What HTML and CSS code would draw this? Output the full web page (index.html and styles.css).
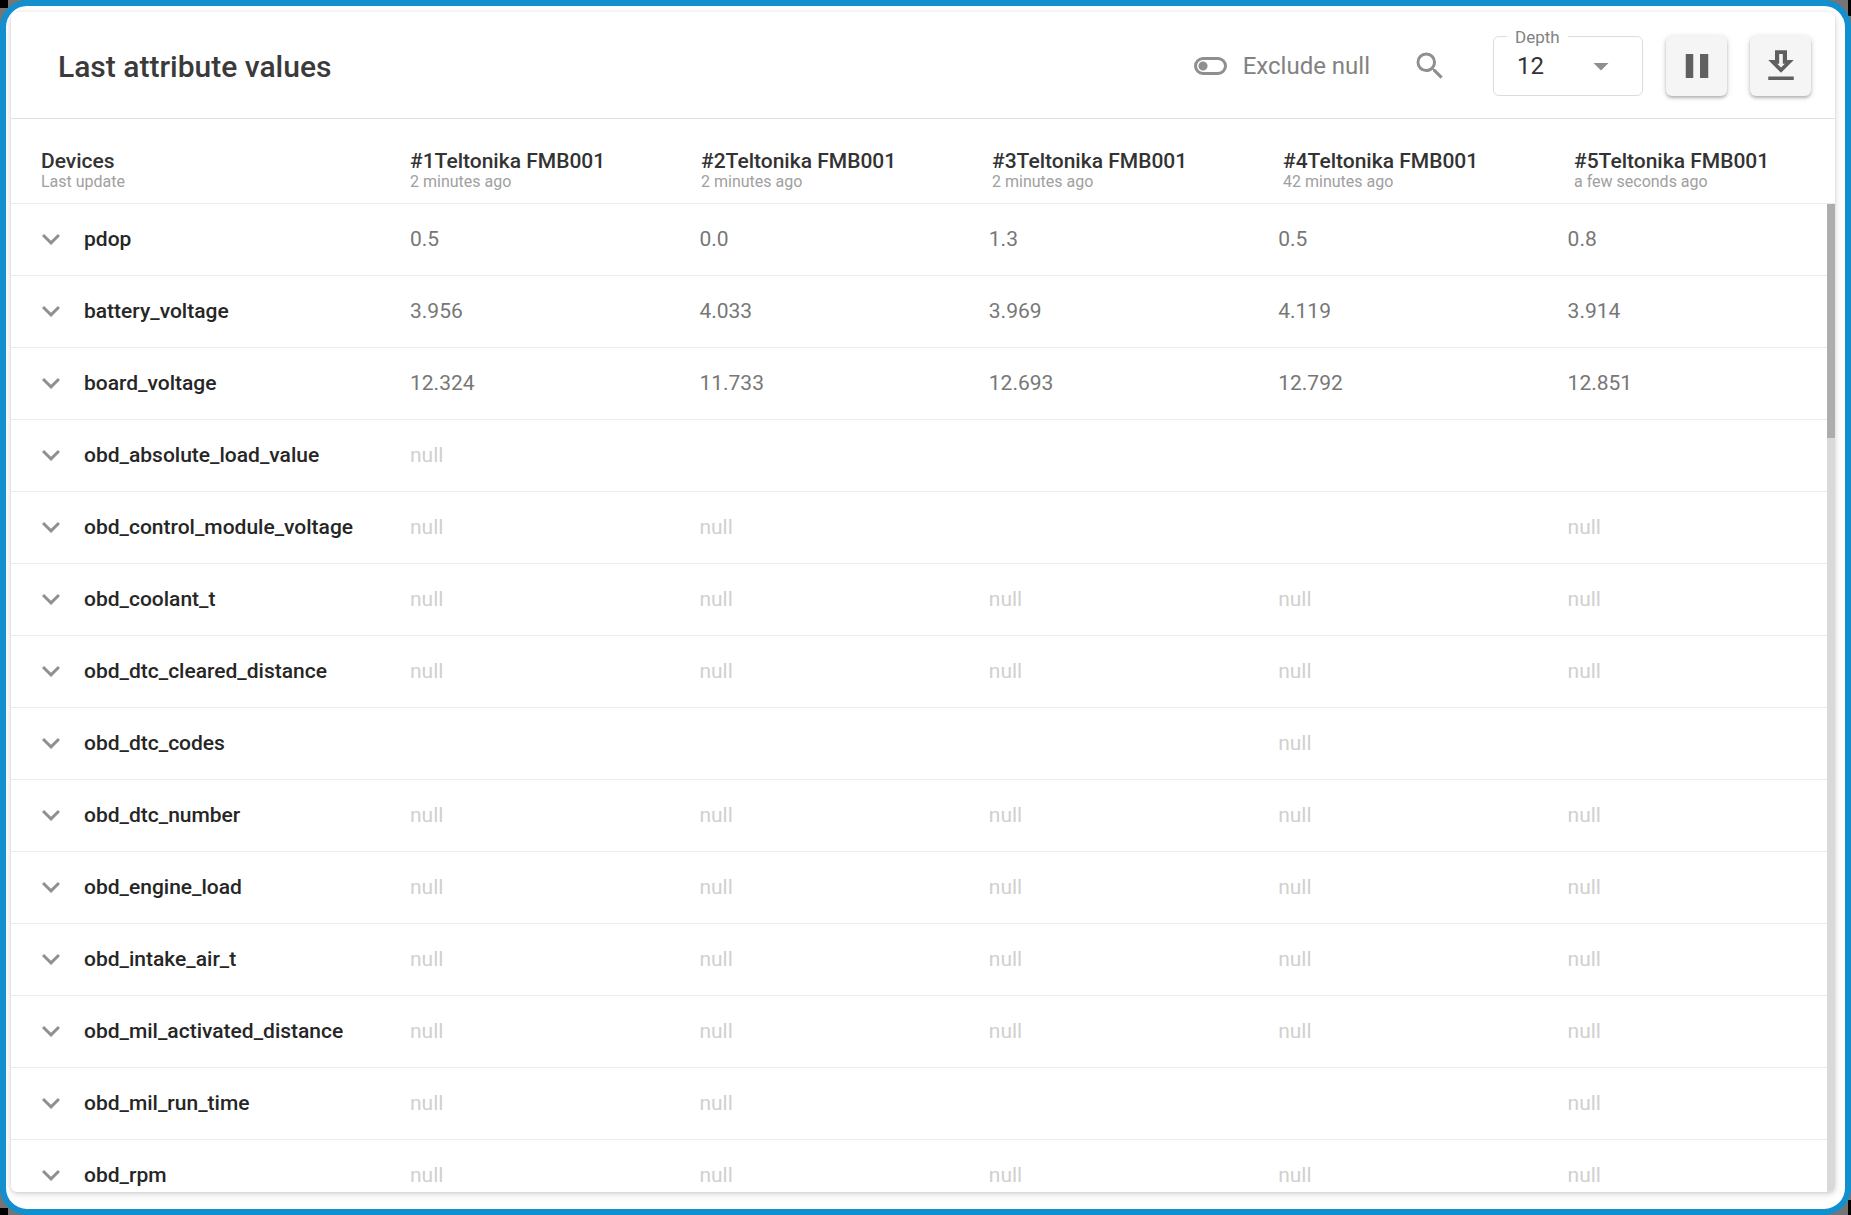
FILE: index.html
```
<!DOCTYPE html>
<html lang="en">
<head>
<meta charset="utf-8">
<title>Last attribute values</title>
<link rel="stylesheet" href="styles.css">
</head>
<body>
<main class="frame">
  <section class="card">
    <header class="toolbar">
      <h1 class="title">Last attribute values</h1>
      <label class="toggle"><input type="checkbox" class="switch">Exclude null</label>
      <button class="search" type="button" aria-label="Search">
        <svg width="36" height="36" viewBox="0 0 24 24" fill="currentColor"><path d="M15.5 14h-.79l-.28-.27A6.471 6.471 0 0 0 16 9.5 6.5 6.5 0 1 0 9.5 16c1.61 0 3.09-.59 4.23-1.57l.27.28v.79l5 4.99L20.49 19l-4.99-5zm-6 0C7.01 14 5 11.99 5 9.5S7.01 5 9.5 5 14 7.01 14 9.5 11.99 14 9.5 14z"/></svg>
      </button>
      <div class="field">
        <label class="field-label" for="depth">Depth</label>
        <select class="select" id="depth"><option>12</option></select>
        <svg class="arrow" width="36" height="36" viewBox="0 0 24 24" fill="currentColor"><path d="M7 10l5 5 5-5z"/></svg>
      </div>
      <button class="action" type="button" aria-label="Pause">
        <svg width="36" height="36" viewBox="0 0 24 24" fill="currentColor"><path d="M4.500 4h5v16h-5zM14 4h5.500v16H14z"/></svg>
      </button>
      <button class="action" type="button" aria-label="Download">
        <svg width="36" height="36" viewBox="0 0 24 24" fill="currentColor"><path fill-rule="evenodd" d="M8 1.500h8V8h4.500L12 16.500 3.500 8H8zM10.800 4v6.500H9.400L12 13l2.600-2.500h-1.400V4zM3.500 19h17v2.300h-17z"/></svg>
      </button>
    </header>
    <table class="grid">
      <thead class="grid-head">
        <tr class="row">
          <th class="corner" scope="col">Devices<small class="sub">Last update</small></th>
          <th scope="col">#1Teltonika FMB001<small class="sub">2 minutes ago</small></th>
          <th scope="col">#2Teltonika FMB001<small class="sub">2 minutes ago</small></th>
          <th scope="col">#3Teltonika FMB001<small class="sub">2 minutes ago</small></th>
          <th scope="col">#4Teltonika FMB001<small class="sub">42 minutes ago</small></th>
          <th scope="col">#5Teltonika FMB001<small class="sub">a few seconds ago</small></th>
        </tr>
      </thead>
      <tbody class="grid-body" id="rows"></tbody>
    </table>
  </section>
</main>
<script src="rows.js"></script>
</body>
</html>
```
FILE: rows.js
```
const N = 'null';
const attributes = [
  ['pdop', '0.5', '0.0', '1.3', '0.5', '0.8'],
  ['battery_voltage', '3.956', '4.033', '3.969', '4.119', '3.914'],
  ['board_voltage', '12.324', '11.733', '12.693', '12.792', '12.851'],
  ['obd_absolute_load_value', N, '', '', '', ''],
  ['obd_control_module_voltage', N, N, '', '', N],
  ['obd_coolant_t', N, N, N, N, N],
  ['obd_dtc_cleared_distance', N, N, N, N, N],
  ['obd_dtc_codes', '', '', '', N, ''],
  ['obd_dtc_number', N, N, N, N, N],
  ['obd_engine_load', N, N, N, N, N],
  ['obd_intake_air_t', N, N, N, N, N],
  ['obd_mil_activated_distance', N, N, N, N, N],
  ['obd_mil_run_time', N, N, '', '', N],
  ['obd_rpm', N, N, N, N, N]
];
const chevron = '<svg class="chevron" width="36" height="36" viewBox="0 0 24 24" fill="currentColor"><path d="M7.410 8.590L12 13.170l4.590-4.580L18 10l-6 6-6-6z"/></svg>';

document.getElementById('rows').innerHTML = attributes.map(([name, ...values]) => `
  <tr class="row">
    <th class="name" scope="row"><button class="expand" type="button">${chevron}${name}</button></th>
    ${values.map(v => `<td class="${v === N ? 'empty' : 'value'}">${v}</td>`).join('')}
  </tr>`).join('');
```
FILE: styles.css
```
* { box-sizing: border-box; }

body {
  margin: 0;
  height: 100vh;
  font-family: Roboto, "Liberation Sans", sans-serif;
  font-size: 21px;
  color: #333;
  background:
    linear-gradient(#000, #000) 0 0 / 8px 8px no-repeat,
    linear-gradient(#000, #000) 100% 0 / 3px 16px no-repeat,
    linear-gradient(#000, #000) 0 100% / 8px 7px no-repeat,
    linear-gradient(#000, #000) 100% 100% / 3px 15px no-repeat,
    #757575;
}

.frame {
  height: 100%;
  padding: 6px 10px 17px 5px;
  border: 6px solid #128fcf;
  border-radius: 27px;
  background: #fff;
  overflow: hidden;
}

.card {
  display: flex;
  flex-direction: column;
  height: 100%;
  border-radius: 6px;
  background: #fff;
  box-shadow: 0 2px 8px rgba(0, 0, 0, .14), 0 1px 3px rgba(0, 0, 0, .1);
  overflow: hidden;
}

.toolbar {
  display: flex;
  flex: none;
  align-items: center;
  height: 107px;
  padding: 2px 24px 0 47px;
  border-bottom: 1px solid #e0e0e0;
}

.title {
  flex: 1;
  margin: 0;
  font-size: 30px;
  font-weight: 500;
  color: #3a3a3a;
}

.toggle {
  display: flex;
  align-items: center;
  gap: 16px;
  font-size: 24px;
  color: #828282;
}

.switch {
  appearance: none;
  width: 33px;
  height: 18px;
  margin: 0;
  border: 3px solid #8f8f8f;
  border-radius: 9px;
  background: radial-gradient(circle at 6px 6px, #8f8f8f 4px, transparent 5px);
}

button {
  display: flex;
  align-items: center;
  justify-content: center;
  padding: 0;
  border: 0;
  background: none;
  font: inherit;
  color: inherit;
}

.search {
  width: 48px;
  height: 48px;
  margin: 0 39px 0 36px;
  color: #8f8f8f;
}

.field {
  position: relative;
  width: 150px;
  height: 60px;
}

.field-label {
  position: absolute;
  top: -9px;
  left: 14px;
  padding: 0 8px;
  background: #fff;
  font-size: 17px;
  line-height: 20px;
  color: #828282;
}

.select {
  appearance: none;
  width: 100%;
  height: 100%;
  padding: 0 23px;
  border: 1px solid #dcdcdc;
  border-radius: 6px;
  background: #fff;
  font: inherit;
  font-size: 24px;
  color: #333;
}

.arrow {
  position: absolute;
  top: 12px;
  right: 24px;
  color: #8f8f8f;
  pointer-events: none;
}

.action {
  width: 61px;
  height: 60px;
  margin-left: 23px;
  border-radius: 6px;
  background: #f5f5f5;
  box-shadow: 0 1px 6px rgba(0, 0, 0, .14), 0 2px 3px rgba(0, 0, 0, .22);
  color: #606060;
}

.grid {
  display: flex;
  flex: 1;
  flex-direction: column;
  min-height: 0;
}

.row {
  display: grid;
  grid-template-columns: 369px repeat(5, 1fr);
  border-bottom: 1px solid #ececec;
}

th, td {
  padding: 0 0 0 30px;
  text-align: left;
}

.grid-head {
  flex: none;
}

.grid-head th {
  height: 84px;
  padding-top: 30px;
  font-weight: 500;
  line-height: 24px;
}

.sub {
  display: block;
  font-size: 16px;
  font-weight: 400;
  line-height: 18px;
  color: #a0a0a0;
}

/* The right edge holds the scrollbar: a thumb over a lighter track. */
.grid-body {
  display: block;
  flex: 1;
  min-height: 0;
  padding-right: 8px;
  overflow: hidden;
  background:
    linear-gradient(#adadad, #adadad) 100% 0 / 8px 234px no-repeat,
    linear-gradient(#d9d9d9, #d9d9d9) 100% 0 / 8px 100% no-repeat;
}

.grid-body th, .grid-body td {
  height: 71px;
  line-height: 70px;
}

.grid-body .name {
  padding-left: 22px;
  font-weight: 500;
  color: #262626;
}

.expand {
  gap: 15px;
  height: 70px;
}

.chevron {
  color: #909090;
}

.value { color: #777; }
.empty { color: #d0d0d0; }
```
